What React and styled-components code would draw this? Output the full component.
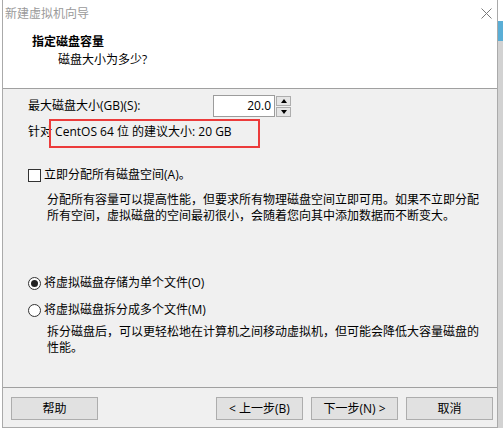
import React from 'react';
import styled, { createGlobalStyle } from 'styled-components';

const Global = createGlobalStyle`
  html, body { margin: 0; padding: 0; background: #fff; }
  body {
    font-family: "Open Sans", "Noto Sans CJK SC", sans-serif;
    font-size: 12px;
    color: #000;
  }
  #root { width: 503px; height: 430px; overflow: hidden; }
`;

const Desktop = styled.div`
  display: flex;
  width: 503px;
  height: 430px;
  padding-left: 2px;
  box-sizing: border-box;
  background: #fff;
`;

const Backdrop = styled.div`
  flex: 1;
  height: 428px;
  background: linear-gradient(
    to bottom,
    #ffffff 0 21px,
    #5aaed6 21px 41px,
    #d2d2d2 41px 100%
  );
`;

const Window = styled.div`
  width: 496px;
  height: 428px;
  box-sizing: border-box;
  border: 1px solid #aaaaaa;
  border-top: none;
  background: #f0f0f0;
  display: flex;
  flex-direction: column;
`;

const TitleBar = styled.div`
  height: 27px;
  flex: none;
  background: #fff;
  display: flex;
  align-items: center;
  justify-content: space-between;
  padding-left: 2px;
`;

const TitleText = styled.span`
  color: #9a9a9a;
  line-height: 16px;
`;

const CloseButton = styled.div`
  width: 22px;
  height: 27px;
  display: flex;
  align-items: center;
  justify-content: center;
`;

const Header = styled.div`
  height: 54px;
  flex: none;
  background: #fff;
  border-bottom: 1px solid #a0a0a0;
  padding: 7px 0 0 29px;
  box-sizing: content-box;
`;

const HeaderTitle = styled.div`
  font-weight: 700;
  line-height: 16px;
`;

const HeaderSub = styled.div`
  margin-top: 2px;
  padding-left: 26px;
  line-height: 16px;
`;

const Body = styled.div`
  flex: 1;
  padding: 6px 0 0 25px;
  display: flex;
  flex-direction: column;
`;

const SizeRow = styled.div`
  display: flex;
  align-items: center;
  height: 22px;
`;

const FieldLabel = styled.span`
  width: 185px;
  line-height: 16px;
`;

const SpinField = styled.div`
  width: 62px;
  height: 22px;
  box-sizing: border-box;
  border: 1px solid #9c9c9c;
  background: #fff;
  text-align: right;
  padding-right: 3px;
  line-height: 20px;
`;

const SpinButtons = styled.div`
  margin-left: 1px;
  display: flex;
  flex-direction: column;
  gap: 1px;
`;

const SpinButton = styled.div`
  width: 15px;
  height: 10px;
  box-sizing: border-box;
  border: 1px solid #adadad;
  background: #e5e5e5;
  display: flex;
  align-items: center;
  justify-content: center;
  &::before {
    content: "";
    width: 0;
    height: 0;
    border-left: 3.5px solid transparent;
    border-right: 3.5px solid transparent;
    ${(p) => (p.$down ? 'border-top: 4px solid #000;' : 'border-bottom: 4px solid #000;')}
  }
`;

const HintRow = styled.div`
  position: relative;
  margin-top: 7px;
  line-height: 16px;
`;

const HighlightBox = styled.div`
  position: absolute;
  left: 21px;
  top: -5px;
  width: 211px;
  height: 29px;
  box-sizing: border-box;
  border: 2px solid #ec3b3b;
  pointer-events: none;
`;

const OptionRow = styled.div`
  display: flex;
  align-items: center;
  height: 16px;
  margin-top: ${(p) => p.$gap}px;
`;

const CheckBox = styled.span`
  width: 13px;
  height: 13px;
  box-sizing: border-box;
  border: 1px solid #333;
  background: #fff;
  margin-right: 3px;
  flex: none;
`;

const Radio = styled.span`
  width: 13px;
  height: 13px;
  box-sizing: border-box;
  border: 1px solid #333;
  border-radius: 50%;
  background: #fff;
  margin-right: 3px;
  flex: none;
  display: flex;
  align-items: center;
  justify-content: center;
  &::after {
    content: "";
    width: 7px;
    height: 7px;
    border-radius: 50%;
    background: ${(p) => (p.$checked ? '#222' : 'transparent')};
  }
`;

const OptionLabel = styled.span`
  line-height: 16px;
`;

const Description = styled.div`
  margin-top: ${(p) => p.$gap}px;
  margin-left: 19px;
  line-height: 16px;
  white-space: nowrap;
`;

const Footer = styled.div`
  flex: none;
  border-top: 1px solid #a0a0a0;
  padding: 9px 4px 7px 8px;
  display: flex;
  align-items: center;
`;

const ButtonGroup = styled.div`
  margin-left: auto;
  display: flex;
  gap: 8px;
`;

const Button = styled.div`
  width: 87px;
  height: 23px;
  box-sizing: border-box;
  border: 1px solid #adadad;
  background: #e1e1e1;
  display: flex;
  align-items: center;
  justify-content: center;
  line-height: 16px;
`;

export default function App() {
  return (
    <>
      <Global />
      <Desktop>
        <Window>
          <TitleBar>
            <TitleText>新建虚拟机向导</TitleText>
            <CloseButton>
              <svg width="11" height="11" viewBox="0 0 11 11">
                <path d="M0.5 0.5 L10.5 10.5 M10.5 0.5 L0.5 10.5" stroke="#7a7a7a" strokeWidth="1" fill="none" />
              </svg>
            </CloseButton>
          </TitleBar>
          <Header>
            <HeaderTitle>指定磁盘容量</HeaderTitle>
            <HeaderSub>磁盘大小为多少?</HeaderSub>
          </Header>
          <Body>
            <SizeRow>
              <FieldLabel>最大磁盘大小(GB)(S):</FieldLabel>
              <SpinField>20.0</SpinField>
              <SpinButtons>
                <SpinButton />
                <SpinButton $down />
              </SpinButtons>
            </SizeRow>
            <HintRow>
              针对 CentOS 64 位 的建议大小: 20 GB
              <HighlightBox />
            </HintRow>
            <OptionRow $gap={27}>
              <CheckBox />
              <OptionLabel>立即分配所有磁盘空间(A)。</OptionLabel>
            </OptionRow>
            <Description $gap={9}>
              分配所有容量可以提高性能，但要求所有物理磁盘空间立即可用。如果不立即分配
              <br />
              所有空间，虚拟磁盘的空间最初很小，会随着您向其中添加数据而不断变大。
            </Description>
            <OptionRow $gap={51}>
              <Radio $checked />
              <OptionLabel>将虚拟磁盘存储为单个文件(O)</OptionLabel>
            </OptionRow>
            <OptionRow $gap={11}>
              <Radio />
              <OptionLabel>将虚拟磁盘拆分成多个文件(M)</OptionLabel>
            </OptionRow>
            <Description $gap={6}>
              拆分磁盘后，可以更轻松地在计算机之间移动虚拟机，但可能会降低大容量磁盘的
              <br />
              性能。
            </Description>
          </Body>
          <Footer>
            <Button>帮助</Button>
            <ButtonGroup>
              <Button>&lt; 上一步(B)</Button>
              <Button>下一步(N) &gt;</Button>
              <Button>取消</Button>
            </ButtonGroup>
          </Footer>
        </Window>
        <Backdrop />
      </Desktop>
    </>
  );
}
